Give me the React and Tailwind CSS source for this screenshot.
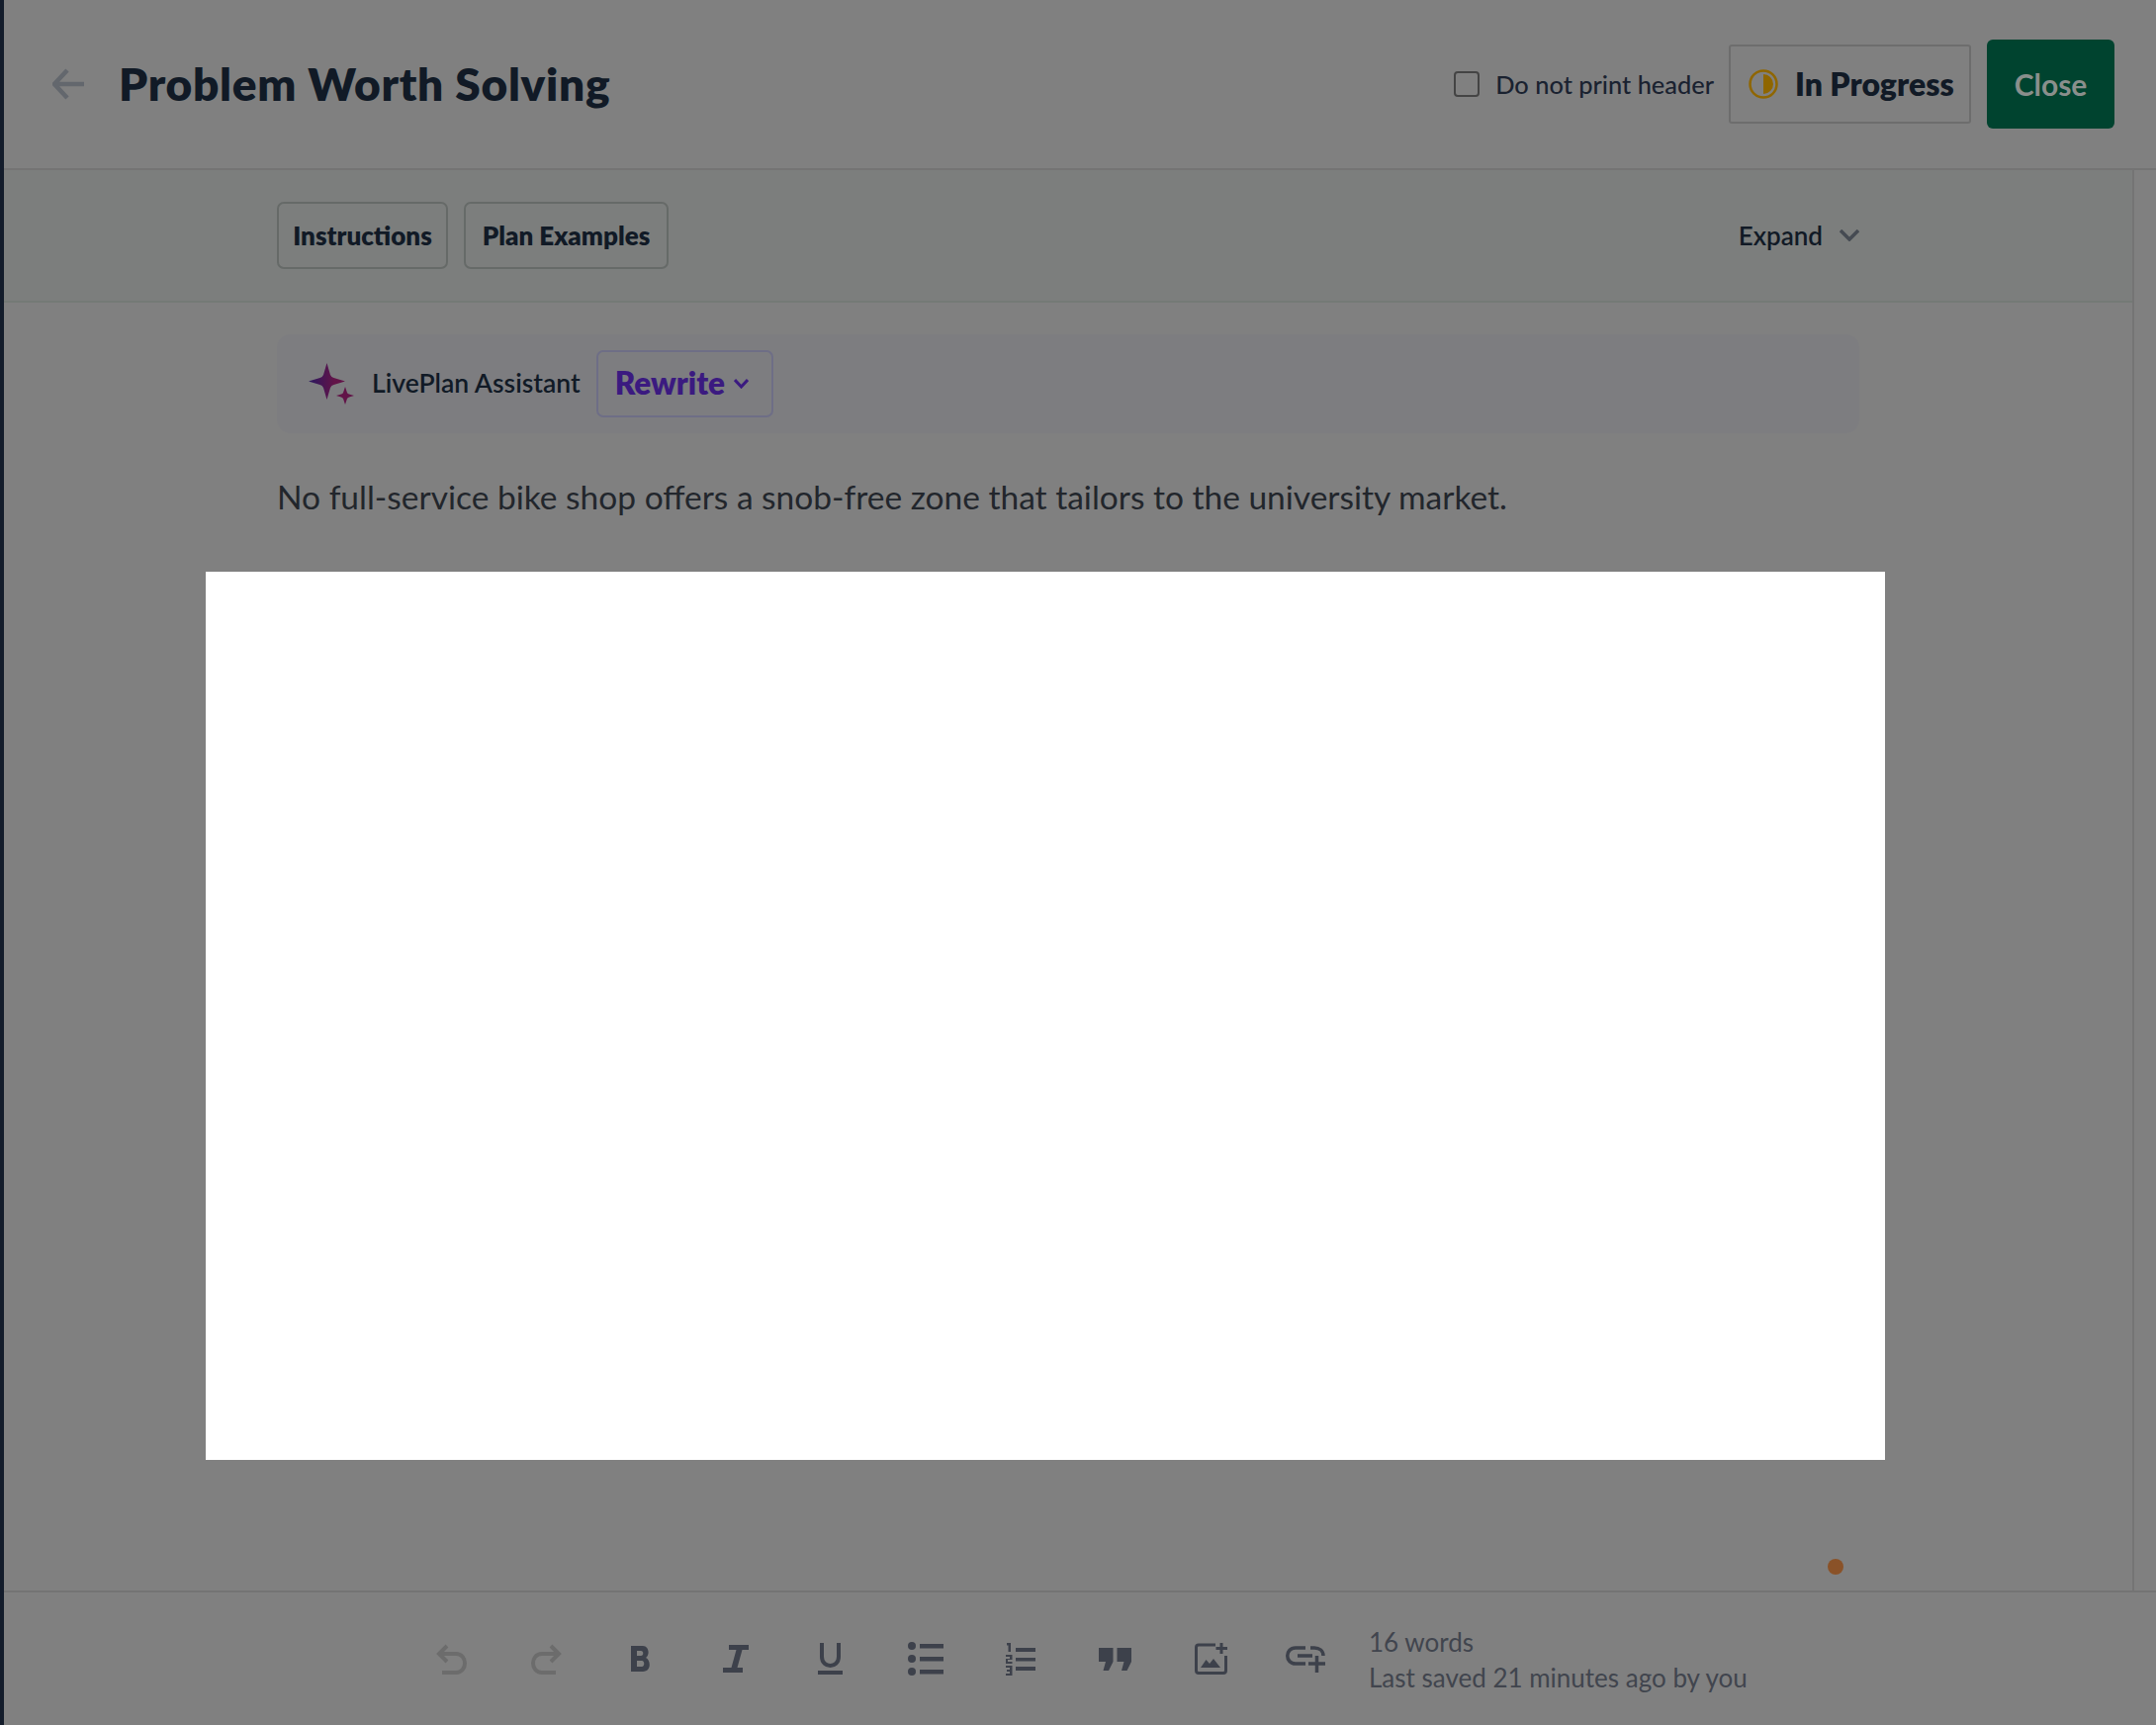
import { useState } from "react";

const font = "font-['Lato','Liberation_Sans',sans-serif]";

function Sparkle() {
  return (
    <svg width="46" height="42" viewBox="0 0 46 42">
      <defs>
        <linearGradient id="spark" x1="0" y1="0" x2="1" y2="0">
          <stop offset="0" stopColor="#2a1860" />
          <stop offset="0.7" stopColor="#621448" />
          <stop offset="1" stopColor="#621448" />
        </linearGradient>
      </defs>
      <path d="M18.500 0 L22 12 Q23 14.500 25.500 15 L37 18.500 L25.500 22 Q23 22.500 22 25 L18.500 37 L15 25 Q14 22.500 11.500 22 L0 18.500 L11.500 15 Q14 14.500 15 12 Z" fill="url(#spark)" />
      <path d="M37 24 L39 30 Q39.500 31 41 31.500 L46 33 L41 34.500 Q39.500 35 39 36 L37 42 L35 36 Q34.500 35 33 34.500 L28 33 L33 31.500 Q34.500 31 35 30 Z" fill="#621448" />
    </svg>
  );
}

function ToolIcon({ children, w, h, box, color = "#3d414b" }) {
  return (
    <svg width={w} height={h} viewBox={box} fill="none" stroke={color} strokeWidth="4" className="shrink-0">
      {children}
    </svg>
  );
}

function Toolbar() {
  return (
    <div className="flex items-center w-[899px]">
      <div className="w-[95px]">
        <ToolIcon w={32} h={31} box="0 0 32 31" color="#6c6c6c">
          <path d="M11 2 L3 10 L11 18" />
          <path d="M3 10 H20 C32 10 32 29 20 29 H6" />
        </ToolIcon>
      </div>
      <div className="w-[95px]">
        <ToolIcon w={32} h={31} box="0 0 32 31" color="#6c6c6c">
          <path d="M21 2 L29 10 L21 18" />
          <path d="M29 10 H12 C0 10 0 29 12 29 H26" />
        </ToolIcon>
      </div>
      <div className="w-[100px] pl-[7px]">
        <svg width="20" height="26" viewBox="0 0 20 26" className="shrink-0" fill="#3d414b" fillRule="evenodd">
          <path d="M0 0 H12 C18 0 19.500 9 15 12 C20 14 21 26 12 26 H0 Z M6 5 V10 H10 C13 10 13 5 10 5 Z M6 15 V21 H11 C14 21 14 15 11 15 Z" />
        </svg>
      </div>
      <div className="w-[96px]">
        <svg width="26" height="28" viewBox="0 0 26 28" className="shrink-0" fill="#3d414b">
          <path d="M6 0 H26 V5 H19.500 L14.500 23 H20 V28 H0 V23 H8.500 L13.500 5 H6 Z" />
        </svg>
      </div>
      <div className="w-[91px]">
        <ToolIcon w={25} h={32} box="0 0 25 32">
          <path d="M4 0 V14 C4 26 21 26 21 14 V0" />
          <path d="M0 30 H25" />
        </ToolIcon>
      </div>
      <div className="w-[98px]">
        <svg width="36" height="34" viewBox="0 0 36 34" className="shrink-0" fill="#3d414b">
          <circle cx="4" cy="4" r="4" />
          <circle cx="4" cy="17" r="4" />
          <circle cx="4" cy="30" r="4" />
          <path d="M12 2 H36 V6.500 H12 Z M12 15 H36 V19.500 H12 Z M12 28 H36 V32.500 H12 Z" />
        </svg>
      </div>
      <div className="w-[95px]">
        <svg width="31" height="33" viewBox="0 0 31 33" className="shrink-0" fill="#3d414b">
          <path d="M2 0 H6 V9 H3.500 V2.500 H2 Z" />
          <path d="M1 12 H7.500 V17 H3 V19 H7.500 V21 H1 V16 H5 V14 H1 Z" />
          <path d="M1 23 H7.500 V33 H1 V31 H5 V29 H2 V27 H5 V25 H1 Z" />
          <path d="M11 5 H31 V9 H11 Z M11 15 H31 V18.500 H11 Z M11 24 H31 V28 H11 Z" />
        </svg>
      </div>
      <div className="w-[97px]">
        <svg width="33" height="23" viewBox="0 0 33 23" className="shrink-0" fill="#3d414b">
          <path d="M0 0 H14.500 V14 L10 23 H4.500 L7 14 H0 Z" />
          <path d="M18.500 0 H33 V14 L28.500 23 H23 L25.500 14 H18.500 Z" />
        </svg>
      </div>
      <div className="w-[92px]">
        <svg width="33" height="32" viewBox="0 0 33 32" className="shrink-0" fill="none" stroke="#3d414b" strokeWidth="3">
          <path d="M21 2 H4 Q1.500 2 1.500 4.500 V28 Q1.500 30.500 4 30.500 H29 Q31.500 30.500 31.500 28 V13" />
          <path d="M27 0 V11 M21.500 5.500 H33" />
          <path d="M6 25 L11.500 17 L15 21 L19 16 L26 25 Z" fill="#3d414b" stroke="none" />
        </svg>
      </div>
      <svg width="40" height="27" viewBox="0 0 40 27" className="shrink-0" fill="none" stroke="#3d414b" strokeWidth="3.500">
        <path d="M20 2 H10 C-1 2 -1 18 10 18 H20" />
        <path d="M25 2 H29 C34 2 38 5 38 10" />
        <path d="M12 10 H27" />
        <path d="M31.500 10 V27 M23 18 H40" />
      </svg>
    </div>
  );
}

export default function App() {
  const [noHeader, setNoHeader] = useState(false);

  return (
    <div className={`${font} relative flex w-[2180px] h-[1744px] bg-[#808080] text-[#111a26] overflow-hidden`}>
      <div className="w-[4px] shrink-0 bg-[#131c2b]" />

      <div className="flex-1 flex flex-col min-w-0">
        {/* header */}
        <div className="h-[172px] shrink-0 flex items-center border-b-2 border-[#747474] pl-[49px] pr-[42px]">
          <svg width="32" height="32" viewBox="0 0 32 32" fill="none" stroke="#63676d" strokeWidth="4.500" className="shrink-0">
            <path d="M15 2 L2 16 L15 30 M2 16 H32" />
          </svg>
          <h1 className="ml-[35px] text-[46px] font-extrabold leading-none tracking-[0.7px]">Problem Worth Solving</h1>
          <div className="ml-auto flex items-center">
            <label className="flex items-center gap-[16px] text-[25.400px] font-medium text-[#1a2230]">
              <input
                type="checkbox"
                checked={noHeader}
                onChange={(e) => setNoHeader(e.target.checked)}
                className="appearance-none w-[26px] h-[26px] rounded-[4px] border-2 border-[#444] bg-[#808080]"
              />
              Do not print header
            </label>
            <div className="ml-[15px] w-[245px] h-[80px] flex items-center gap-[17px] pl-[18px] border-2 border-[#6d6d6d] rounded-[3px]">
              <svg width="30" height="30" viewBox="0 0 30 30" className="shrink-0">
                <circle cx="15" cy="15" r="13.500" fill="none" stroke="#8f6600" strokeWidth="2.500" />
                <path d="M15 5 A10 10 0 0 1 15 25 Z" fill="#8f6600" />
              </svg>
              <span className="text-[32px] font-extrabold">In Progress</span>
            </div>
            <button className="ml-[16px] w-[129px] h-[90px] rounded-[6px] bg-[#00432f] text-[#8a8f8c] text-[30px] font-bold">
              Close
            </button>
          </div>
        </div>

        {/* middle */}
        <div className="flex-1 flex min-h-0 pr-[22px]">
          <div className="flex-1 flex flex-col border-r-2 border-[#747474] min-w-0">
            <div className="h-[134px] shrink-0 flex items-center gap-[16px] bg-[#7c7e7d] border-b-2 border-[#747a76] pl-[276px] pr-[276px]">
              <button className="h-[68px] w-[173px] rounded-[7px] border-2 border-[#666a68] text-[26px] font-extrabold">Instructions</button>
              <button className="h-[68px] w-[207px] rounded-[7px] border-2 border-[#666a68] text-[26px] font-extrabold">Plan Examples</button>
              <div className="ml-auto flex items-center gap-[17px] text-[26px] font-semibold">
                Expand
                <svg width="20" height="12" viewBox="0 0 20 12" fill="none" stroke="#454a52" strokeWidth="3.500">
                  <path d="M1 1 L10 10 L19 1" />
                </svg>
              </div>
            </div>

            <div className="flex-1 relative pl-[276px] pr-[276px] pt-[32px]">
              <div className="h-[100px] flex items-center rounded-[14px] bg-[#7d7d80] pl-[32px]">
                <Sparkle />
                <span className="ml-[18px] text-[26.500px] font-semibold">LivePlan Assistant</span>
                <button className="ml-[16px] w-[179px] h-[68px] flex items-center gap-[9px] pl-[17px] rounded-[7px] border-2 border-[#6e6e86] text-[#3b1a80] text-[31.500px] font-extrabold">
                  Rewrite
                  <svg width="15" height="10" viewBox="0 0 15 10" fill="none" stroke="#3b1a80" strokeWidth="3">
                    <path d="M1 1 L7.500 8 L14 1" />
                  </svg>
                </button>
              </div>
              <p className="mt-[44px] text-[33.500px] leading-[40px] text-[#22262c] whitespace-nowrap">
                No full-service bike shop offers a snob-free zone that tailors to the university market.
              </p>
              <span className="absolute left-[1844px] bottom-[16px] w-[16px] h-[16px] rounded-full bg-[#8a5228]" />
            </div>
          </div>
        </div>

        {/* footer */}
        <div className="h-[136px] shrink-0 flex items-center border-t-2 border-[#747474] pl-[437px]">
          <Toolbar />
          <div className="ml-[44px] pt-[1px] text-[26px] leading-[36px] text-[#41454e]">
            <div>16 words</div>
            <div>Last saved 21 minutes ago by you</div>
          </div>
        </div>
      </div>

      {/* white modal body lying over the dimmed page */}
      <div className="absolute left-[208px] top-[578px] w-[1698px] h-[898px] bg-white" />
    </div>
  );
}
